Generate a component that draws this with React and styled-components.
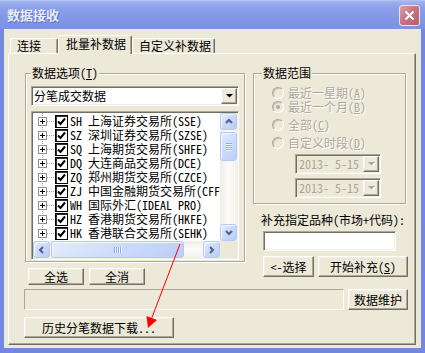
import React from "react";
import styled, { createGlobalStyle, css } from "styled-components";

const UI = `"Noto Sans Mono CJK SC", "Noto Sans CJK SC", "Liberation Mono", monospace`;
const BG = "#ECE9D8";

const GlobalStyle = createGlobalStyle`
  html, body { margin: 0; padding: 0; background: ${BG}; }
  body { font-family: ${UI}; font-size: 12px; line-height: 14px; color: #000; }
  *, *::before, *::after { box-sizing: border-box; }
`;

const sunken = css`
  border: 1px solid;
  border-color: #ACA899 #fff #fff #ACA899;
  box-shadow: inset 1px 1px 0 #716F64, inset -1px -1px 0 #F1EFE2;
`;

const raised = css`
  background: ${BG};
  border: 1px solid;
  border-color: #fff #716F64 #716F64 #fff;
  box-shadow: inset -1px -1px 0 #ACA899, inset 1px 1px 0 #F1EFE2;
`;

const Window = styled.div`
  position: relative;
  width: 425px;
  height: 353px;
  display: flex;
  flex-direction: column;
  background: #7387DE;
  overflow: hidden;
`;

const TitleBar = styled.div`
  flex: none;
  height: 29px;
  display: flex;
  align-items: flex-start;
  justify-content: space-between;
  padding: 0 5px 0 7px;
  background: linear-gradient(to bottom, #B4C4F2 0px, #9DB0EC 2px, #8CA1E8 8px, #8298E5 18px, #7B91E2 29px);
`;

const Title = styled.div`
  margin-top: 7px;
  font-family: "Noto Sans CJK SC", sans-serif;
  font-weight: 700;
  font-size: 13px;
  line-height: 16px;
  color: #E6ECFB;
  text-shadow: 1px 1px 0 #5C70C6;
`;

const CloseBtn = styled.div`
  margin-top: 5px;
  width: 21px;
  height: 21px;
  border: 1px solid #EFE2EA;
  border-radius: 3px;
  background: linear-gradient(135deg, #DB9FAB 0%, #C87484 45%, #B65C6E 100%);
  display: flex;
  align-items: center;
  justify-content: center;
`;

const Client = styled.div`
  flex: 1;
  min-height: 0;
  margin: 0 4px 5px 4px;
  background: ${BG};
  padding: 6px 5px 3px 4px;
  display: flex;
  flex-direction: column;
`;

const TabRow = styled.div`
  flex: none;
  height: 18px;
  display: flex;
  align-items: flex-end;
  padding-left: 2px;
  position: relative;
  z-index: 1;
`;

const Tab = styled.div`
  width: ${(p) => p.$w}px;
  height: ${(p) => (p.$active ? 19 : 15)}px;
  margin-bottom: ${(p) => (p.$active ? -1 : 0)}px;
  padding-left: ${(p) => (p.$active ? 7 : 6)}px;
  padding-top: ${(p) => (p.$active ? 1 : 0)}px;
  line-height: 14px;
  background: ${BG};
  border-top: 1px solid #fff;
  border-left: 1px solid #fff;
  border-right: 1px solid #716F64;
  box-shadow: inset -1px 0 0 #ACA899;
  border-radius: 2px 2px 0 0;
  white-space: nowrap;
`;

const Panel = styled.div`
  flex: 1;
  background: ${BG};
  border-top: 1px solid #fff;
  border-left: 1px solid #fff;
  border-right: 1px solid #716F64;
  border-bottom: 1px solid #716F64;
  box-shadow: inset -1px -1px 0 #ACA899;
  padding: 19px 7px 0 15px;
  display: flex;
  flex-direction: column;
`;

const TopArea = styled.div`
  display: flex;
  align-items: flex-start;
`;

const Column = styled.div`
  width: ${(p) => p.$w}px;
  margin-left: ${(p) => p.$ml || 0}px;
  display: flex;
  flex-direction: column;
  align-items: flex-start;
`;

const Group = styled.div`
  width: ${(p) => p.$w}px;
  margin-left: ${(p) => p.$ml || 0}px;
  border: 1px solid #ACA899;
  box-shadow: inset 1px 1px 0 #fff, 1px 1px 0 #fff;
  padding: 0 ${(p) => p.$pr}px ${(p) => p.$pb}px ${(p) => p.$pl}px;
  display: flex;
  flex-direction: column;
  align-items: flex-start;
`;

const Legend = styled.div`
  height: 14px;
  line-height: 14px;
  margin-top: -8px;
  padding: 0 1px;
  background: ${BG};
  white-space: nowrap;
`;

const Combo = styled.div`
  ${sunken};
  background: #fff;
  width: 100%;
  height: 20px;
  margin-top: 6px;
  display: flex;
  align-items: center;
  padding: 1px 1px 1px 2px;
`;

const ComboText = styled.span`
  flex: 1;
  white-space: nowrap;
`;

const DropBtn = styled.div`
  ${raised};
  width: 16px;
  height: 16px;
  display: flex;
  align-items: center;
  justify-content: center;
`;

const ListBox = styled.div`
  ${sunken};
  background: #fff;
  width: 100%;
  height: 149px;
  margin-top: 5px;
  padding: 1px;
  display: grid;
  grid-template-columns: 1fr 17px;
  grid-template-rows: 1fr 17px;
  overflow: hidden;
`;

const TreeArea = styled.div`
  overflow: hidden;
  padding-top: 1px;
  background-image: linear-gradient(to bottom, #A0A0A0 50%, transparent 50%);
  background-size: 1px 2px;
  background-repeat: repeat-y;
  background-position: 9px 0;
`;

const TreeRow = styled.div`
  height: 14px;
  display: flex;
  align-items: center;
  padding-left: 5px;
  white-space: nowrap;
`;

const PlusBox = styled.span`
  flex: none;
  position: relative;
  width: 9px;
  height: 9px;
  border: 1px solid #8E8F8F;
  background: #fff;
  &::before {
    content: "";
    position: absolute;
    left: 1px;
    top: 3px;
    width: 5px;
    height: 1px;
    background: #000;
  }
  &::after {
    content: "";
    position: absolute;
    left: 3px;
    top: 1px;
    width: 1px;
    height: 5px;
    background: #000;
  }
`;

const Connector = styled.span`
  flex: none;
  width: 8px;
  height: 1px;
  background: repeating-linear-gradient(to right, #A0A0A0 0 1px, transparent 1px 2px);
`;

const CheckBox = styled.span`
  flex: none;
  width: 13px;
  height: 13px;
  border: 1px solid #000;
  box-shadow: inset 1px 1px 0 #333;
  background: #fff;
  display: flex;
  align-items: center;
  justify-content: center;
`;

const ItemText = styled.span`
  margin-left: 2px;
`;

const track = css`
  background: linear-gradient(${(p) => (p.$horiz ? "to bottom" : "to right")}, #EEEDE6 0%, #FBFBF8 50%, #F3F1EC 100%);
`;

const VScroll = styled.div`
  ${track};
  display: flex;
  flex-direction: column;
`;

const HScroll = styled.div`
  ${track};
  display: flex;
  flex-direction: row;
`;

const Corner = styled.div`
  background: ${BG};
`;

const ScrollBtn = styled.div`
  flex: none;
  width: 17px;
  height: 17px;
  border: 1px solid #B7CAF5;
  border-radius: 3px;
  background: linear-gradient(135deg, #E6EDFE 0%, #CAD8FC 50%, #B9CCF8 100%);
  box-shadow: inset 1px 1px 0 #F5F8FF;
  display: flex;
  align-items: center;
  justify-content: center;
`;

const Spacer = styled.div`
  flex: 1;
`;

const Thumb = styled.div`
  flex: none;
  ${(p) =>
    p.$horiz
      ? css`
          width: ${p.$len}px;
          height: 17px;
          margin-left: 1px;
        `
      : css`
          width: 17px;
          height: ${p.$len}px;
          margin-top: 2px;
        `}
  border: 1px solid #B3C7F6;
  border-radius: 3px;
  background: linear-gradient(135deg, #E4ECFE 0%, #CCDAFC 50%, #BCCFF9 100%);
  box-shadow: inset 1px 1px 0 #F5F8FF;
  display: flex;
  align-items: center;
  justify-content: center;
`;

const Grip = styled.div`
  display: flex;
  flex-direction: ${(p) => (p.$horiz ? "row" : "column")};
  gap: 1px;
`;

const GripLine = styled.span`
  display: block;
  width: ${(p) => (p.$horiz ? 1 : 6)}px;
  height: ${(p) => (p.$horiz ? 6 : 1)}px;
  background: #8DA9EC;
  box-shadow: ${(p) => (p.$horiz ? "1px 0 0 #F3F7FF" : "0 1px 0 #F3F7FF")};
`;

const ButtonRow = styled.div`
  display: flex;
  gap: ${(p) => p.$gap || 5}px;
  margin-top: ${(p) => p.$mt || 0}px;
  margin-left: ${(p) => p.$ml || 0}px;
`;

const Button = styled.div`
  ${raised};
  width: ${(p) => p.$w}px;
  height: ${(p) => p.$h || 21}px;
  display: flex;
  align-items: center;
  justify-content: center;
  white-space: nowrap;
`;

const RadioRow = styled.div`
  height: 14px;
  display: flex;
  align-items: center;
  gap: 4px;
  margin-left: 10px;
  margin-top: ${(p) => p.$mt || 0}px;
`;

const Radio = styled.span`
  position: relative;
  flex: none;
  width: 12px;
  height: 12px;
  border-radius: 50%;
  border: 1px solid;
  border-color: #ACA899 #fff #fff #ACA899;
  background: ${BG};
  box-shadow: inset 1px 1px 0 #C9C5B4;
  ${(p) =>
    p.$checked &&
    css`
      &::after {
        content: "";
        position: absolute;
        left: 3px;
        top: 3px;
        width: 4px;
        height: 4px;
        border-radius: 50%;
        background: #ACA899;
      }
    `}
`;

const Disabled = styled.span`
  color: #ACA899;
  text-shadow: 1px 1px 0 #fff;
  white-space: nowrap;
`;

const DateField = styled.div`
  ${sunken};
  width: 86px;
  height: 20px;
  margin-left: 33px;
  margin-top: 4px;
  background: ${BG};
  padding: 1px;
  display: flex;
  align-items: center;
`;

const DateText = styled.span`
  flex: 1;
  padding-left: 2px;
  color: #ACA899;
  white-space: nowrap;
`;

const Label = styled.div`
  margin-top: ${(p) => p.$mt || 0}px;
  margin-left: ${(p) => p.$ml || 0}px;
  white-space: nowrap;
`;

const TextInput = styled.div`
  ${sunken};
  background: #fff;
  width: 133px;
  height: 20px;
  margin-top: 4px;
  margin-left: 10px;
`;

const StatusRow = styled.div`
  display: flex;
  gap: 4px;
  margin-top: ${(p) => p.$mt}px;
`;

const StatusBox = styled.div`
  width: 320px;
  height: 21px;
  border: 1px solid;
  border-color: #ACA899 #fff #fff #ACA899;
`;

const Overlay = styled.svg`
  position: absolute;
  left: 0;
  top: 0;
  pointer-events: none;
`;

const Arrow = ({ dir }) => {
  const pts = {
    up: "1,5 4,2 7,5",
    down: "1,2 4,5 7,2",
    left: "5,1 2,4 5,7",
    right: "2,1 5,4 2,7",
  }[dir];
  return (
    <svg width="8" height="8" viewBox="0 0 8 8">
      <polyline points={pts} fill="none" stroke="#4D6185" strokeWidth="2" />
    </svg>
  );
};

const Tri = ({ color = "#000", shadow }) => (
  <svg width="9" height="6" viewBox="0 0 9 6">
    {shadow && <polygon points="2,2 9,2 5.5,5.5" fill="#fff" />}
    <polygon points="1,1 8,1 4.5,4.5" fill={color} />
  </svg>
);

const items = [
  ["SH", "上海证券交易所(SSE)"],
  ["SZ", "深圳证券交易所(SZSE)"],
  ["SQ", "上海期货交易所(SHFE)"],
  ["DQ", "大连商品交易所(DCE)"],
  ["ZQ", "郑州期货交易所(CZCE)"],
  ["ZJ", "中国金融期货交易所(CFFEX)"],
  ["WH", "国际外汇(IDEAL PRO)"],
  ["HZ", "香港期货交易所(HKFE)"],
  ["HK", "香港联合交易所(SEHK)"],
  ["SG", "上海黄金交易所(SGE)"],
];

export default function App() {
  return (
    <>
      <GlobalStyle />
      <Window>
        <TitleBar>
          <Title>数据接收</Title>
          <CloseBtn>
            <svg width="11" height="11" viewBox="0 0 11 11">
              <path d="M1.5 1.5 L9.5 9.5 M9.5 1.5 L1.5 9.5" stroke="#fff" strokeWidth="2" />
            </svg>
          </CloseBtn>
        </TitleBar>
        <Client>
          <TabRow>
            <Tab $w={48}>连接</Tab>
            <Tab $w={74} $active>批量补数据</Tab>
            <Tab $w={83}>自定义补数据</Tab>
          </TabRow>
          <Panel>
            <TopArea>
              <Column $w={221}>
                <Group $w={220} $ml={1} $pl={5} $pr={5} $pb={1}>
                  <Legend>数据选项(<u>T</u>)</Legend>
                  <Combo>
                    <ComboText>分笔成交数据</ComboText>
                    <DropBtn>
                      <Tri />
                    </DropBtn>
                  </Combo>
                  <ListBox>
                    <TreeArea>
                      {items.map(([code, name]) => (
                        <TreeRow key={code}>
                          <PlusBox />
                          <Connector />
                          <CheckBox>
                            <svg width="9" height="9" viewBox="0 0 9 9">
                              <path d="M1 4.5 L3.5 7 L8 1.5" stroke="#000" strokeWidth="2" fill="none" />
                            </svg>
                          </CheckBox>
                          <ItemText>
                            {code} {name}
                          </ItemText>
                        </TreeRow>
                      ))}
                    </TreeArea>
                    <VScroll>
                      <ScrollBtn>
                        <Arrow dir="up" />
                      </ScrollBtn>
                      <Thumb $len={29}>
                        <Grip>
                          <GripLine />
                          <GripLine />
                          <GripLine />
                          <GripLine />
                        </Grip>
                      </Thumb>
                      <Spacer />
                      <ScrollBtn>
                        <Arrow dir="down" />
                      </ScrollBtn>
                    </VScroll>
                    <HScroll $horiz>
                      <ScrollBtn>
                        <Arrow dir="left" />
                      </ScrollBtn>
                      <Thumb $horiz $len={133}>
                        <Grip $horiz>
                          <GripLine $horiz />
                          <GripLine $horiz />
                          <GripLine $horiz />
                          <GripLine $horiz />
                        </Grip>
                      </Thumb>
                      <Spacer />
                      <ScrollBtn>
                        <Arrow dir="right" />
                      </ScrollBtn>
                    </HScroll>
                    <Corner />
                  </ListBox>
                </Group>
                <ButtonRow $mt={6} $ml={4}>
                  <Button $w={56} $h={17}>全选</Button>
                  <Button $w={56} $h={17}>全消</Button>
                </ButtonRow>
              </Column>
              <Column $w={154} $ml={8}>
                <Group $w={153} $pl={8} $pr={4} $pb={5}>
                  <Legend>数据范围</Legend>
                  <RadioRow $mt={6}>
                    <Radio />
                    <Disabled>最近一星期(<u>A</u>)</Disabled>
                  </RadioRow>
                  <RadioRow>
                    <Radio $checked />
                    <Disabled>最近一个月(<u>B</u>)</Disabled>
                  </RadioRow>
                  <RadioRow $mt={4}>
                    <Radio />
                    <Disabled>全部(<u>C</u>)</Disabled>
                  </RadioRow>
                  <RadioRow $mt={4}>
                    <Radio />
                    <Disabled>自定义时段(<u>D</u>)</Disabled>
                  </RadioRow>
                  <DateField>
                    <DateText>2013- 5-15</DateText>
                    <DropBtn>
                      <Tri color="#ACA899" shadow />
                    </DropBtn>
                  </DateField>
                  <DateField>
                    <DateText>2013- 5-15</DateText>
                    <DropBtn>
                      <Tri color="#ACA899" shadow />
                    </DropBtn>
                  </DateField>
                </Group>
                <Label $mt={9} $ml={8}>补充指定品种(市场+代码):</Label>
                <TextInput />
                <ButtonRow $mt={5} $ml={10} $gap={4}>
                  <Button $w={51}>&lt;-选择</Button>
                  <Button $w={90}>开始补充(<u>S</u>)</Button>
                </ButtonRow>
              </Column>
            </TopArea>
            <StatusRow $mt={4}>
              <StatusBox />
              <Button $w={60}>数据维护</Button>
            </StatusRow>
            <StatusRow $mt={7}>
              <Button $w={150}>历史分笔数据下载...</Button>
            </StatusRow>
          </Panel>
        </Client>
        <Overlay width="425" height="353" viewBox="0 0 425 353">
          <line x1="180" y1="244" x2="151" y2="320" stroke="#F00" strokeWidth="1" />
          <polygon points="148,328 146.5,316 157,320" fill="#F00" />
        </Overlay>
      </Window>
    </>
  );
}
